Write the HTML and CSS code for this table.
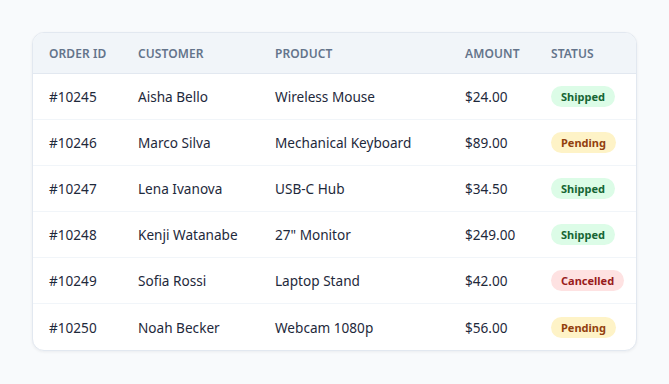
FILE: index.html
```html
<!DOCTYPE html>
<html>
<head>
<meta charset="utf-8">
<link rel="stylesheet" href="styles.css">
</head>
<body>
<div class="card">
  <table class="orders">
    <colgroup>
      <col class="c1"><col class="c2"><col class="c3"><col class="c4"><col class="c5">
    </colgroup>
    <thead>
      <tr><th>Order ID</th><th>Customer</th><th>Product</th><th>Amount</th><th>Status</th></tr>
    </thead>
    <tbody>
      <tr><td>#10245</td><td>Aisha Bello</td><td>Wireless Mouse</td><td>$24.00</td><td><span class="badge shipped">Shipped</span></td></tr>
      <tr><td>#10246</td><td>Marco Silva</td><td>Mechanical Keyboard</td><td>$89.00</td><td><span class="badge pending">Pending</span></td></tr>
      <tr><td>#10247</td><td>Lena Ivanova</td><td>USB-C Hub</td><td>$34.50</td><td><span class="badge shipped">Shipped</span></td></tr>
      <tr><td>#10248</td><td>Kenji Watanabe</td><td>27" Monitor</td><td>$249.00</td><td><span class="badge shipped">Shipped</span></td></tr>
      <tr><td>#10249</td><td>Sofia Rossi</td><td>Laptop Stand</td><td>$42.00</td><td><span class="badge cancelled">Cancelled</span></td></tr>
      <tr><td>#10250</td><td>Noah Becker</td><td>Webcam 1080p</td><td>$56.00</td><td><span class="badge pending">Pending</span></td></tr>
    </tbody>
  </table>
</div>
</body>
</html>
```
FILE: styles.css
```css
html, body { margin: 0; padding: 0; }
body {
  background: #f8fafc;
  padding: 32px;
  font-family: "Noto Sans", "Open Sans", sans-serif;
  color: #1e293b;
}
.card {
  background: #ffffff;
  border: 1px solid #e2e8f0;
  border-radius: 12px;
  overflow: hidden;
  box-shadow: 0 1px 3px rgba(15, 23, 42, 0.06);
}
.orders {
  width: 100%;
  border-collapse: collapse;
  table-layout: fixed;
}
.c1 { width: 89px; }
.c2 { width: 137px; }
.c3 { width: 190px; }
.c4 { width: 86px; }
.orders th {
  background: #f1f5f9;
  text-align: left;
  font-size: 12px;
  font-weight: 600;
  color: #64748b;
  text-transform: uppercase;
  letter-spacing: 0.1px;
  height: 40px;
  padding: 0 0 0 16px;
  border-bottom: 1px solid #e2e8f0;
}
.orders td {
  font-size: 13.6px;
  height: 45px;
  padding: 0 0 0 16px;
  border-bottom: 1px solid #f1f5f9;
  white-space: nowrap;
}
.orders tbody tr:last-child td { border-bottom: none; height: 46px; }
.badge {
  display: inline-block;
  font-size: 11px;
  font-weight: 700;
  padding: 3px 10px;
  border-radius: 999px;
  line-height: 15px;
}
.shipped { background: #dcfce7; color: #166534; }
.pending { background: #fef3c7; color: #92400e; }
.cancelled { background: #fee2e2; color: #991b1b; }
```
